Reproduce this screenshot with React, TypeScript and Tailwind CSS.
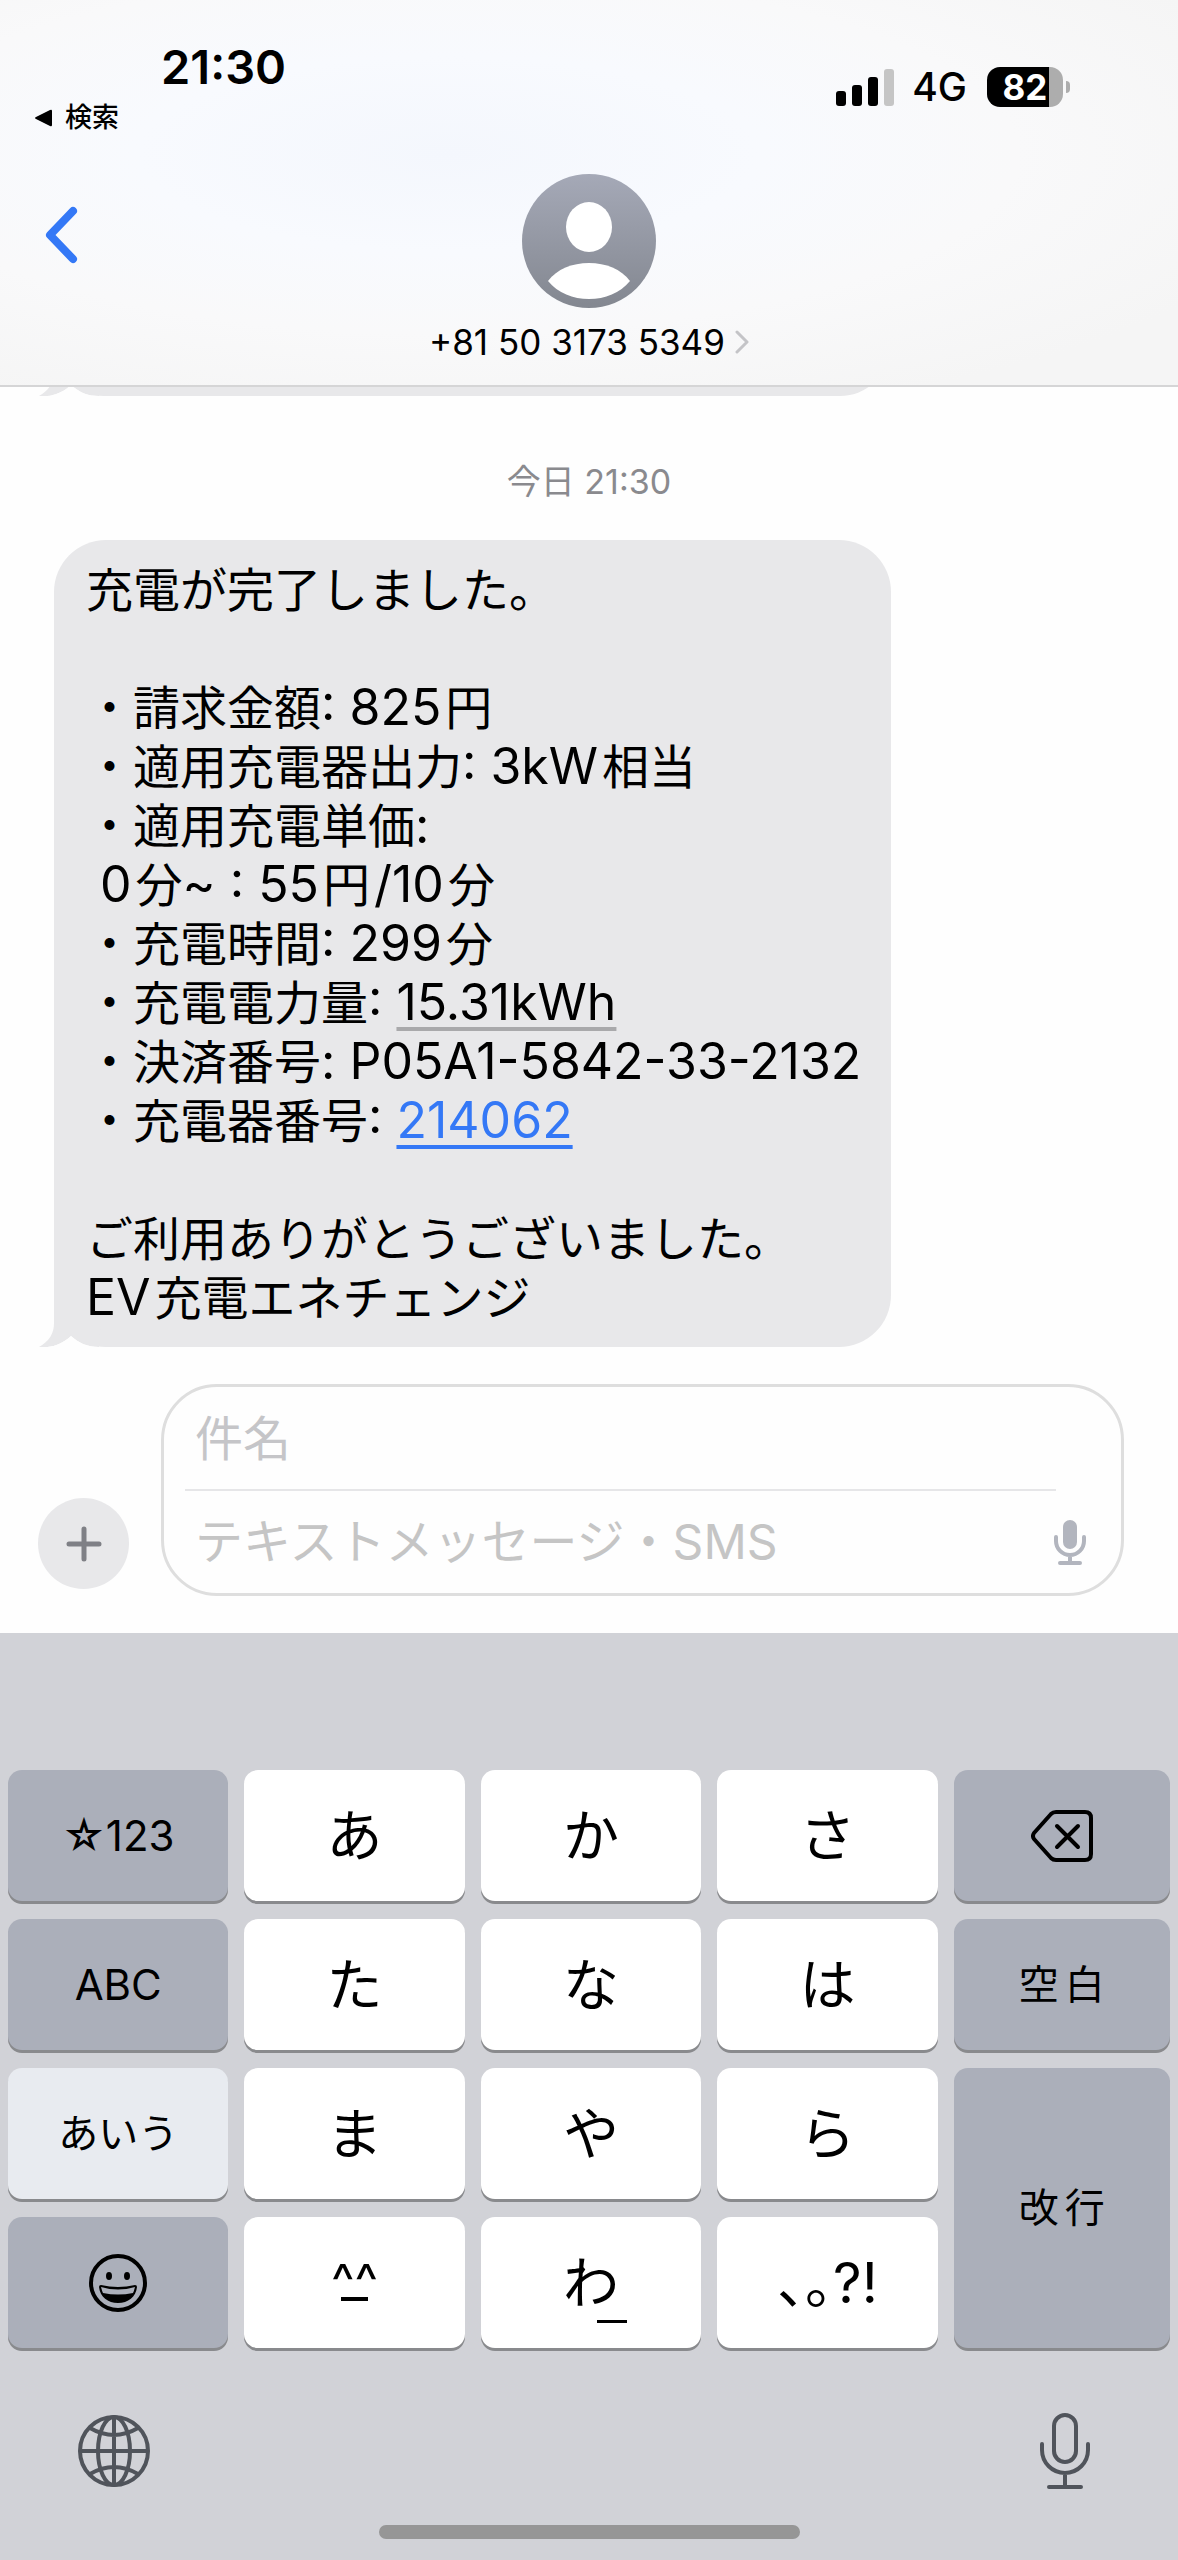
import { clsx } from "clsx";
import { FC, ReactNode } from "react";

interface KeyProps {
  label: string;
  variant?: "light" | "dark" | "active";
  className?: string;
  children: ReactNode;
}

interface LatinProps {
  gap?: "after" | "both";
  children: ReactNode;
}

// latin text is set a little larger than the kana around it
const Latin: FC<LatinProps> = ({ gap, children }) => (
  <span
    className={clsx("text-[50px]", gap === "after" && "mr-1", gap === "both" && "mx-1")}
  >
    {children}
  </span>
);

const Key: FC<KeyProps> = ({ label, variant = "light", className, children }) => (
  <button
    type="button"
    aria-label={label}
    className={clsx(
      "flex items-center justify-center rounded-[14px] shadow-[0_3px_0_#898a8d]",
      variant === "light" && "bg-white text-[56px]",
      variant === "dark" && "bg-[#abafba] text-[40px]",
      variant === "active" && "bg-[#e8ebf0] text-[40px]",
      className,
    )}
  >
    {children}
  </button>
);

const Tail = () => (
  <svg
    aria-hidden="true"
    viewBox="0 0 64 60"
    className="absolute bottom-0 -left-[15px] h-[60px] w-[64px] text-[#e8e8ea]"
  >
    <path
      fill="currentColor"
      d="M15 0V36C15 47 10 54 0 60C12 61 22 58 32 49C40 56 48 60 60 60L64 0Z"
    />
    <path fill="#fefefe" d="M0 60C12 61 22 58 32 49C40 56 48 60 60 60V61H0Z" />
  </svg>
);

const StatusBar = () => (
  <div className="flex justify-between pl-[34px] pr-[108px] pt-[38px]">
    <div>
      <div className="pl-[127px] text-[47px] leading-[58px] font-semibold">21:30</div>
      <a href="#" className="mt-[3px] flex items-center gap-3 text-[27px] leading-[38px] font-medium">
        <svg aria-hidden="true" viewBox="0 0 19 18" className="h-[18px] w-[19px]">
          <path d="M18 2V16Q18 18 16 17L2 10Q0 9 2 8L16 1Q18 0 18 2Z" />
        </svg>
        検索
      </a>
    </div>
    <div className="flex h-[98px] items-center">
      <svg aria-hidden="true" viewBox="0 0 58 37" className="h-[37px] w-[58px]">
        <rect x="0" y="22" width="10" height="15" rx="3" />
        <rect x="16" y="16" width="10" height="21" rx="3" />
        <rect x="32" y="8" width="10" height="29" rx="3" />
        <rect x="48" y="0" width="10" height="37" rx="3" fill="#c5c5c5" />
      </svg>
      <span className="ml-[18px] text-[39px] leading-[44px] font-medium">4G</span>
      <div className="ml-5 flex h-10 w-[76px] items-center justify-center rounded-[13px] bg-linear-to-r from-black from-82% to-[#adadad] to-82%">
        <span className="text-[35px] leading-10 font-bold text-white">82</span>
      </div>
      <div className="ml-[3px] h-3 w-1 rounded-r-full bg-[#adadad]" />
    </div>
  </div>
);

const Header = () => (
  <header className="h-[387px] border-b-2 border-[#d5d5d6] bg-[radial-gradient(ellipse_at_38%_40%,#f4f7fd_0%,#f8fafe_30%,#f9f9fa_55%,#f5f5f5_85%)]">
    <StatusBar />
    <div className="grid grid-cols-3 items-start px-[45px]">
      <button type="button" aria-label="戻る" className="mt-[69px] justify-self-start">
        <svg viewBox="0 0 34 58" className="h-[58px] w-[34px]" fill="none">
          <path d="M28 5L5 29L28 53" stroke="#3478f6" strokeWidth="8" strokeLinecap="round" strokeLinejoin="round" />
        </svg>
      </button>
      <button type="button" className="mt-[37px] flex flex-col items-center">
        <svg aria-hidden="true" viewBox="0 0 134 134" className="h-[134px] w-[134px]">
          <defs>
            <linearGradient id="avatar" x1="0" y1="0" x2="0" y2="1">
              <stop offset="0" stopColor="#a5a9b7" />
              <stop offset="1" stopColor="#838790" />
            </linearGradient>
          </defs>
          <circle cx="67" cy="67" r="67" fill="url(#avatar)" />
          <ellipse cx="67" cy="53" rx="23" ry="25" fill="#fff" />
          <path d="M26 107C35 95 50 89 67 89C84 89 99 95 108 107C98 119 83 125 67 125C51 125 36 119 26 107Z" fill="#fff" />
        </svg>
        <span className="mt-3 flex items-center gap-[10px] text-[35px] leading-[44px] whitespace-nowrap">
          +81 50 3173 5349
          <svg aria-hidden="true" viewBox="0 0 14 24" className="h-6 w-[14px]" fill="none">
            <path d="M2 2L12 12L2 22" stroke="#c4c4c7" strokeWidth="3" strokeLinecap="round" strokeLinejoin="round" />
          </svg>
        </span>
      </button>
    </div>
  </header>
);

const Messages = () => (
  <main className="px-[54px]">
    {/* end of the previous message */}
    <div className="h-[9px] overflow-hidden -ml-4 pl-4">
      <div className="relative -mt-[91px] h-[100px] w-[836px] rounded-[52px] bg-[#e8e8ea]">
        <Tail />
      </div>
    </div>

    <p className="mt-[62px] text-center text-[34px] leading-[48px] text-[#8a8a8e]">今日 21:30</p>

    <div className="relative mt-[34px] w-fit rounded-[52px] bg-[#e8e8ea]">
      <Tail />
      <div className="relative py-5 pr-[30px] pl-8 text-[47px] leading-[59px] whitespace-pre">
        <p>充電が完了しました。</p>
        <br />
        <p>・請求金額<Latin>: </Latin><Latin gap="after">825</Latin>円</p>
        <p>・適用充電器出力<Latin>: </Latin><Latin gap="after">3kW</Latin>相当</p>
        <p>・適用充電単価<Latin>:</Latin></p>
        <p><Latin gap="after"> 0</Latin>分<Latin gap="after">~ : 55</Latin>円<Latin gap="both">/10</Latin>分</p>
        <p>・充電時間<Latin>: </Latin><Latin gap="after">299</Latin>分</p>
        <p>
          ・充電電力量<Latin>: </Latin>
          <a href="#" className="text-[50px] underline decoration-[#a9a9ab] decoration-4 underline-offset-[7px]">15.31kWh</a>
        </p>
        <p>・決済番号<Latin>: P05A1-5842-33-2132</Latin></p>
        <p>
          ・充電器番号<Latin>: </Latin>
          <a href="tel:214062" className="text-[50px] text-[#3478f6] underline decoration-4 underline-offset-[7px]">214062</a>
        </p>
        <br />
        <p>ご利用ありがとうございました。</p>
        <p><Latin gap="after">EV</Latin>充電エネチェンジ</p>
      </div>
    </div>
  </main>
);

const Composer = () => (
  <form className="flex items-end gap-8 pt-[37px] pr-[54px] pb-[37px] pl-[38px]" onSubmit={(e) => e.preventDefault()}>
    <button type="button" aria-label="追加" className="mb-[7px] grid h-[91px] w-[91px] place-content-center rounded-full bg-[#e8e8ea]">
      <svg viewBox="0 0 36 36" className="h-9 w-9">
        <path d="M18 3V33M3 18H33" stroke="#7f8086" strokeWidth="5" strokeLinecap="round" />
      </svg>
    </button>
    <div className="min-w-0 flex-1 rounded-[56px] border-[3px] border-[#dedede] px-[21px]">
      <input
        aria-label="件名"
        placeholder="件名"
        className="block h-[104px] w-[calc(100%-44px)] border-b-2 border-[#e6e6e8] px-[10px] text-[48px] outline-none placeholder:text-[#c5c5c8]"
      />
      <div className="flex h-[102px] items-center justify-between pr-[14px] pl-[10px]">
        <input
          aria-label="テキストメッセージ・SMS"
          placeholder="テキストメッセージ・SMS"
          className="min-w-0 flex-1 text-[48px] outline-none placeholder:text-[#c5c5c5]"
        />
        <button type="button" aria-label="音声入力">
          <svg viewBox="0 0 32 46" className="h-[46px] w-8" fill="none" stroke="#b2b5be" strokeWidth="4" strokeLinecap="round">
            <rect x="9" y="1" width="14" height="29" rx="7" fill="#b2b5be" stroke="none" />
            <path d="M2 18V22A14 14 0 0 0 30 22V18M16 36V43M6 44H26" />
          </svg>
        </button>
      </div>
    </div>
  </form>
);

const Keyboard = () => (
  <section aria-label="キーボード" className="flex flex-1 flex-col bg-[#d1d2d7] px-2 pt-[137px]">
    <div className="grid auto-rows-[131px] grid-cols-[220fr_220fr_220fr_220fr_216fr] gap-x-4 gap-y-[18px]">
      <Key label="☆123" variant="dark">
        <span className="text-[42px]">☆123</span>
      </Key>
      <Key label="あ">あ</Key>
      <Key label="か">か</Key>
      <Key label="さ">さ</Key>
      <Key label="削除" variant="dark">
        <svg viewBox="0 0 62 52" className="h-[52px] w-[62px]" fill="none" stroke="#000" strokeWidth="4" strokeLinecap="round" strokeLinejoin="round">
          <path d="M25 2H54Q60 2 60 8V44Q60 50 54 50H25Q22 50 20 48L3 29Q1 26 3 23L20 4Q22 2 25 2Z" />
          <path d="M26 16L47 37M47 16L26 37" />
        </svg>
      </Key>

      <Key label="ABC" variant="dark">
        <span className="text-[42px]">ABC</span>
      </Key>
      <Key label="た">た</Key>
      <Key label="な">な</Key>
      <Key label="は">は</Key>
      <Key label="空白" variant="dark" className="gap-1.5">
        <span>空</span>
        <span>白</span>
      </Key>

      <Key label="あいう" variant="active">あいう</Key>
      <Key label="ま">ま</Key>
      <Key label="や">や</Key>
      <Key label="ら">ら</Key>
      <Key label="改行" variant="dark" className="row-span-2 gap-1.5">
        <span>改</span>
        <span>行</span>
      </Key>

      <Key label="絵文字" variant="dark">
        <svg viewBox="0 0 58 58" className="h-[58px] w-[58px]">
          <circle cx="29" cy="29" r="27" fill="none" stroke="#000" strokeWidth="4" />
          <ellipse cx="20" cy="22" rx="3" ry="4" />
          <ellipse cx="38" cy="22" rx="3" ry="4" />
          <path d="M12 31Q29 35 46 31Q48 31 48 33C47 43 39 49 29 49S11 43 10 33Q10 31 12 31Z" />
          <path d="M12 33Q29 38 46 33Q45 37 44 39Q29 42 14 39Q13 37 12 33Z" fill="#abafba" />
        </svg>
      </Key>
      <Key label="^^" className="flex-col">
        <span className="text-[50px] leading-8">^^</span>
        <span className="h-1 w-[27px] bg-black" />
      </Key>
      <Key label="わ">
        <span className="relative">
          わ
          <span className="absolute -right-2 bottom-[2px] h-[3px] w-[30px] bg-black" />
        </span>
      </Key>
      <Key label="、。?!">
        <span className="[font-feature-settings:'halt']">、。?!</span>
      </Key>
    </div>

    <div className="flex items-center justify-between pt-[64px] pr-[79px] pl-[70px]">
      <button type="button" aria-label="言語切替">
        <svg viewBox="0 0 72 72" className="h-[72px] w-[72px]" fill="none" stroke="#50545b" strokeWidth="4">
          <circle cx="36" cy="36" r="34" />
          <ellipse cx="36" cy="36" rx="16" ry="34" />
          <path d="M36 2V70M2 36H70M12 13Q36 27 60 13M12 59Q36 45 60 59" />
        </svg>
      </button>
      <button type="button" aria-label="音声入力">
        <svg viewBox="0 0 52 78" className="h-[78px] w-[52px]" fill="none" stroke="#50545b" strokeWidth="4" strokeLinecap="round">
          <rect x="15" y="3" width="22" height="47" rx="11" />
          <path d="M3 32V38A23 23 0 0 0 49 38V32M26 61V74M10 75H42" />
        </svg>
      </button>
    </div>

    <div className="mx-auto mt-auto mb-[21px] h-[14px] w-[421px] rounded-full bg-[#969696]" />
  </section>
);

export default function App() {
  return (
    <div className="flex min-h-screen flex-col bg-[#fefefe] font-[Inter,'Noto_Sans_CJK_JP',sans-serif] text-black" lang="ja">
      <Header />
      <Messages />
      <Composer />
      <Keyboard />
    </div>
  );
}
